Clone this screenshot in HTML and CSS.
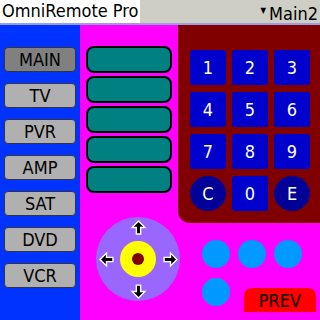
FILE: index.html
```html
<!DOCTYPE html>
<html lang="en">
<head>
    <meta charset="UTF-8">
    <meta name="viewport" content="width=device-width, initial-scale=1.0">
    <title>OmniRemote Pro</title>
    <link rel="stylesheet" href="styles.css">
</head>
<body>
    <header class="titlebar">
        <div class="title">OmniRemote Pro</div>
        <div class="page-pick"><span class="caret">&#9660;</span>Main2</div>
    </header>
    <div class="screen">
        <nav class="devices">
            <button class="dev active">MAIN</button>
            <button class="dev">TV</button>
            <button class="dev">PVR</button>
            <button class="dev">AMP</button>
            <button class="dev">SAT</button>
            <button class="dev">DVD</button>
            <button class="dev">VCR</button>
        </nav>
        <div class="left-pane">
            <div class="bars">
                <div class="bar"></div>
                <div class="bar"></div>
                <div class="bar"></div>
                <div class="bar"></div>
                <div class="bar"></div>
            </div>
            <div class="dpad">
                <span></span>
                <svg class="arrow" viewBox="0 0 14 14"><polygon points="7,1 13,7 9,7 9,13 5,13 5,7 1,7"/></svg>
                <span></span>
                <svg class="arrow" viewBox="0 0 14 14"><polygon points="1,7 7,1 7,5 13,5 13,9 7,9 7,13"/></svg>
                <div class="ring"><div class="dot"></div></div>
                <svg class="arrow" viewBox="0 0 14 14"><polygon points="13,7 7,1 7,5 1,5 1,9 7,9 7,13"/></svg>
                <span></span>
                <svg class="arrow" viewBox="0 0 14 14"><polygon points="7,13 13,7 9,7 9,1 5,1 5,7 1,7"/></svg>
                <span></span>
            </div>
        </div>
        <div class="right-pane">
            <div class="keypad">
                <button class="key">1</button>
                <button class="key">2</button>
                <button class="key">3</button>
                <button class="key">4</button>
                <button class="key">5</button>
                <button class="key">6</button>
                <button class="key">7</button>
                <button class="key">8</button>
                <button class="key">9</button>
                <button class="key round">C</button>
                <button class="key">0</button>
                <button class="key round">E</button>
            </div>
            <div class="extras">
                <div class="row">
                    <div class="blob"></div>
                    <div class="blob"></div>
                    <div class="blob"></div>
                </div>
                <div class="row">
                    <div class="blob"></div>
                    <button class="prev">PREV</button>
                </div>
            </div>
        </div>
    </div>
</body>
</html>
```

FILE: styles.css
```css
body {
    margin: 0;
    width: 320px;
    height: 320px;
    overflow: hidden;
    font-family: "DejaVu Sans Condensed", "DejaVu Sans", sans-serif;
    background: #ff00ff;
}
button {
    font-family: inherit;
    padding: 0;
    margin: 0;
}
.titlebar {
    display: flex;
    justify-content: space-between;
    height: 23px;
    background: #cfcec4;
    border-bottom: 2px solid #9c9ce0;
}
.title {
    background: #fff;
    width: 138px;
    padding-left: 2px;
    font-size: 18px;
    line-height: 22px;
    color: #000;
}
.page-pick {
    font-size: 18px;
    line-height: 22px;
    padding-right: 2px;
    color: #000;
}
.caret {
    font-size: 8px;
    vertical-align: 7px;
    margin-right: 3px;
}
.screen {
    display: flex;
    height: 295px;
}
.devices {
    width: 72px;
    background: #0033ff;
    padding: 22px 4px 0;
    display: flex;
    flex-direction: column;
    gap: 11px;
}
.dev {
    height: 25px;
    background: #b0b0b0;
    border: 1px solid #334;
    border-radius: 4px;
    font-size: 18px;
    line-height: 22px;
    color: #000;
}
.dev.active {
    background: #808080;
}
.left-pane {
    width: 98px;
}
.bars {
    padding: 21px 0 0 6px;
    display: flex;
    flex-direction: column;
    gap: 3px;
}
.bar {
    width: 82px;
    height: 23px;
    background: #008080;
    border: 2px solid #000;
    border-radius: 8px;
}
.dpad {
    margin: 24px 0 0 16px;
    width: 84px;
    height: 84px;
    border-radius: 50%;
    background: #9966ff;
    display: grid;
    grid-template-columns: 20px 44px 20px;
    grid-template-rows: 20px 44px 20px;
    place-items: center;
}
.arrow {
    width: 15px;
    height: 15px;
    fill: #000;
    stroke: #fff;
    stroke-width: 1.3;
    overflow: visible;
}
.ring {
    width: 36px;
    height: 36px;
    border-radius: 50%;
    background: #ffff00;
    display: flex;
    align-items: center;
    justify-content: center;
}
.dot {
    width: 12px;
    height: 12px;
    border-radius: 50%;
    background: #800000;
}
.right-pane {
    width: 142px;
}
.keypad {
    height: 173px;
    background: #800000;
    border-bottom-left-radius: 12px;
    padding: 25px 0 0 12px;
    display: grid;
    grid-template-columns: repeat(3, 36px);
    grid-auto-rows: 35px;
    column-gap: 6px;
    row-gap: 7px;
}
.key {
    background: #0000cc;
    border: none;
    border-radius: 3px;
    color: #fff;
    font-size: 18px;
}
.key.round {
    background: #000099;
    border-radius: 50%;
}
.extras {
    padding: 17px 0 0 24px;
    display: flex;
    flex-direction: column;
    gap: 10px;
}
.row {
    display: flex;
    gap: 8px;
}
.blob {
    width: 28px;
    height: 28px;
    border-radius: 50%;
    background: #0099ff;
}
.prev {
    width: 72px;
    height: 24px;
    margin: 10px 0 0 6px;
    background: #ff0000;
    border: none;
    border-radius: 8px 8px 0 0;
    font-size: 18px;
    color: #000;
}
```
